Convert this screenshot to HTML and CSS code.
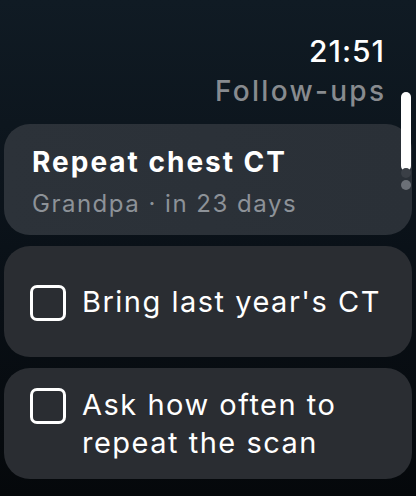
FILE: index.html
```html
<!DOCTYPE html>
<html lang="en">
<head>
    <meta charset="UTF-8">
    <meta name="viewport" content="width=device-width, initial-scale=1.0">
    <title>Follow-ups</title>
    <link rel="stylesheet" href="styles.css">
</head>
<body>

<div class="screen">
    <div class="header">
        <div class="time">21:51</div>
        <div class="page-title">Follow-ups</div>
    </div>

    <div class="list">
        <div class="card summary">
            <div class="card-title">Repeat chest CT</div>
            <div class="card-sub">Grandpa · in 23 days</div>
        </div>

        <div class="card task">
            <div class="task-row">
                <span class="checkbox"></span>
                <span class="task-text">Bring last year's CT</span>
            </div>
        </div>

        <div class="card task">
            <div class="task-row">
                <span class="checkbox"></span>
                <span class="task-text">Ask how often to repeat the scan</span>
            </div>
        </div>
    </div>

    <div class="scroll-indicator">
        <div class="scroll-thumb"></div>
        <div class="scroll-dot dim"></div>
        <div class="scroll-dot"></div>
    </div>
</div>

</body>
</html>
```

FILE: styles.css
```css
html, body {
    margin: 0;
    height: 100%;
}

body {
    font-family: Inter, "Noto Sans", sans-serif;
    background: linear-gradient(to bottom, #101b24 0%, #0a1118 50%, #05080b 100%);
    color: white;
    overflow: hidden;
}

.screen {
    position: relative;
    height: 496px;
}

.header {
    display: flex;
    flex-direction: column;
    align-items: flex-end;
    padding: 33px 32px 0 0;
}

.time {
    font-size: 30px;
    font-weight: 500;
    line-height: 36px;
    letter-spacing: 1px;
    margin-right: -1px;
}

.page-title {
    font-size: 28px;
    font-weight: 500;
    line-height: 32px;
    letter-spacing: 2.3px;
    margin-right: -2.3px;
    color: #888b8f;
    margin-top: 6px;
}

.list {
    display: flex;
    flex-direction: column;
    gap: 11px;
    padding: 17px 4px 0 4px;
}

.card {
    height: 111px;
    box-sizing: border-box;
    border-radius: 26px;
    background: #2a2d32;
}

.summary {
    padding: 21px 28px 0 28px;
    background: linear-gradient(to right, #2c3239, #2a3037);
}

.card-title {
    font-size: 28px;
    font-weight: 700;
    line-height: 34px;
    letter-spacing: 2px;
}

.card-sub {
    font-size: 24px;
    line-height: 30px;
    letter-spacing: 1.5px;
    color: #8d9298;
    margin-top: 10px;
}

.task {
    display: flex;
    align-items: center;
    padding: 0 20px 0 26px;
}

.task-row {
    display: flex;
    align-items: flex-start;
    gap: 16px;
}

.checkbox {
    flex: none;
    width: 30px;
    height: 30px;
    margin-top: 2px;
    border: 3px solid white;
    border-radius: 7px;
}

.task-text {
    font-size: 29px;
    line-height: 38px;
    letter-spacing: 1.5px;
}

.scroll-indicator {
    position: absolute;
    top: 92px;
    right: 5px;
    display: flex;
    flex-direction: column;
    align-items: center;
}

.scroll-thumb {
    width: 10px;
    height: 79px;
    border-radius: 5px;
    background: white;
}

.scroll-dot {
    width: 10px;
    height: 10px;
    border-radius: 50%;
    background: #6b7077;
    margin-top: 2px;
}

.scroll-dot.dim {
    background: #3a3f46;
    margin-top: -3px;
}
```
